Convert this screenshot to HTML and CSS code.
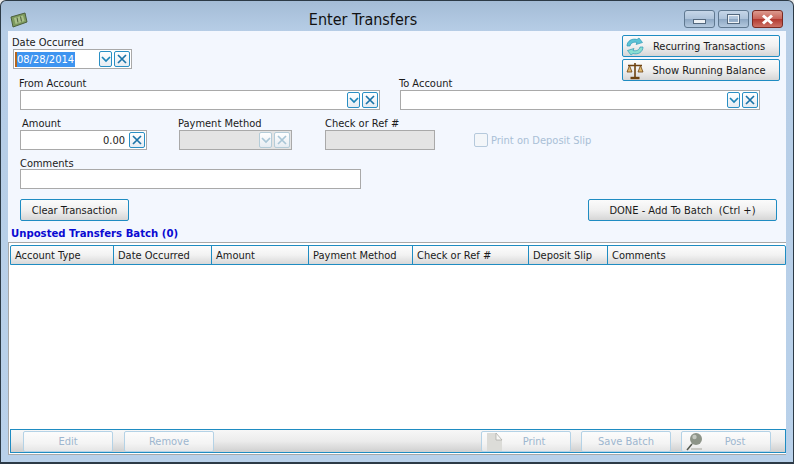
FILE: index.html
```html
<!DOCTYPE html>
<html lang="en">
<head>
    <meta charset="UTF-8">
    <title>Enter Transfers</title>
    <link rel="stylesheet" href="styles.css">
</head>
<body>

<div class="window">
    <div class="titlebar">
        <svg class="app-icon" width="18" height="16" viewBox="0 0 18 16">
            <path d="M1 5 L15 1 L17 10 L3 15 Z" fill="#7d9a5e" stroke="#4c5f3c"/>
            <path d="M4 6 L13 3.500 L14.500 9 L5.500 12 Z" fill="#a9c08a"/>
            <path d="M7 5.500 L8 10.500 M10.500 4.500 L11.500 9.500" stroke="#4c5f3c"/>
        </svg>
        <div class="title">Enter Transfers</div>
        <div class="win-buttons">
            <div class="win-btn"><span class="glyph-min"></span></div>
            <div class="win-btn"><span class="glyph-max"></span></div>
            <div class="win-btn win-close">
                <svg width="15" height="11" viewBox="0 0 15 11"><path d="M3 1.500 L12 9.500 M12 1.500 L3 9.500" stroke="#fff" stroke-width="3"/></svg>
            </div>
        </div>
    </div>

    <div class="client">
        <div class="row row-top">
            <div class="field date-field">
                <label class="shift-left">Date Occurred</label>
                <div class="box">
                    <span class="caret"></span><span class="selected">08/28/2014</span>
                    <span class="mini-btn">
                        <svg width="10" height="8" viewBox="0 0 10 8"><path d="M1 2 L5 6 L9 2" fill="none" stroke="#1c84b8" stroke-width="1.700"/></svg>
                    </span>
                    <span class="mini-btn mini-x">
                        <svg width="10" height="10" viewBox="0 0 10 10"><path d="M1 1 L9 9 M9 1 L1 9" stroke="#1c74a8" stroke-width="1.700"/></svg>
                    </span>
                </div>
            </div>
            <div class="top-actions">
                <button class="button top-button">
                    <svg class="btn-icon" width="18" height="19" viewBox="0 0 18 19">
                        <path d="M1 9 C1 4 6 1 11 2.500 L13 1 L16.500 5.500 L10 7.500 L11 5.500 C8 4.500 4.500 6 4 9 Z" fill="#5cc3d6" stroke="#2f9ab8" stroke-width="0.700"/>
                        <path d="M17 10 C17 15 12 18 7 16.500 L5 18 L1.500 13.500 L8 11.500 L7 13.500 C10 14.500 13.500 13 14 10 Z" fill="#8adfd2" stroke="#2f9ab8" stroke-width="0.700"/>
                    </svg>
                    Recurring Transactions
                </button>
                <button class="button top-button">
                    <svg class="btn-icon" width="18" height="19" viewBox="0 0 18 19">
                        <path d="M9 2 V16 M2 4.500 H16" stroke="#6e4210" stroke-width="1.600"/>
                        <path d="M4.500 17 H13.500" stroke="#6e4210" stroke-width="2.400"/>
                        <path d="M3.500 4.500 L1 11 H6 Z M14.500 4.500 L12 11 H17 Z" fill="#e0b96e" stroke="#6e4210" stroke-width="0.800"/>
                    </svg>
                    Show Running Balance
                </button>
            </div>
        </div>

        <div class="row row-accounts">
            <div class="field account-field">
                <label class="shift-left">From Account</label>
                <div class="box">
                    <span class="mini-btn">
                        <svg width="10" height="8" viewBox="0 0 10 8"><path d="M1 2 L5 6 L9 2" fill="none" stroke="#1c84b8" stroke-width="1.700"/></svg>
                    </span>
                    <span class="mini-btn mini-x">
                        <svg width="10" height="10" viewBox="0 0 10 10"><path d="M1 1 L9 9 M9 1 L1 9" stroke="#1c74a8" stroke-width="1.700"/></svg>
                    </span>
                </div>
            </div>
            <div class="field account-field to-field">
                <label class="shift-left">To Account</label>
                <div class="box">
                    <span class="mini-btn">
                        <svg width="10" height="8" viewBox="0 0 10 8"><path d="M1 2 L5 6 L9 2" fill="none" stroke="#1c84b8" stroke-width="1.700"/></svg>
                    </span>
                    <span class="mini-btn mini-x">
                        <svg width="10" height="10" viewBox="0 0 10 10"><path d="M1 1 L9 9 M9 1 L1 9" stroke="#1c74a8" stroke-width="1.700"/></svg>
                    </span>
                </div>
            </div>
        </div>

        <div class="row row-amount">
            <div class="field amount-field">
                <label class="shift-right">Amount</label>
                <div class="box">
                    <span class="amount-value">0.00</span>
                    <span class="mini-btn mini-x">
                        <svg width="10" height="10" viewBox="0 0 10 10"><path d="M1 1 L9 9 M9 1 L1 9" stroke="#1c74a8" stroke-width="1.700"/></svg>
                    </span>
                </div>
            </div>
            <div class="field method-field">
                <label class="shift-left">Payment Method</label>
                <div class="box box-disabled">
                    <span class="mini-btn">
                        <svg width="10" height="8" viewBox="0 0 10 8"><path d="M1 2 L5 6 L9 2" fill="none" stroke="#a9c6d6" stroke-width="1.700"/></svg>
                    </span>
                    <span class="mini-btn mini-x">
                        <svg width="10" height="10" viewBox="0 0 10 10"><path d="M1 1 L9 9 M9 1 L1 9" stroke="#a9c6d6" stroke-width="1.700"/></svg>
                    </span>
                </div>
            </div>
            <div class="field ref-field">
                <label>Check or Ref #</label>
                <div class="box box-disabled"></div>
            </div>
            <div class="deposit-check">
                <span class="checkbox"></span>
                <span>Print on Deposit Slip</span>
            </div>
        </div>

        <div class="row row-comments">
            <div class="field comments-field">
                <label>Comments</label>
                <div class="box"></div>
            </div>
        </div>

        <div class="row row-actions">
            <button class="button clear-button">Clear Transaction</button>
            <button class="button done-button">DONE - Add To Batch&nbsp; (Ctrl +)</button>
        </div>

        <div class="batch-title">Unposted Transfers Batch (0)</div>

        <div class="grid">
            <div class="grid-header">
                <div class="col col-type">Account Type</div>
                <div class="col col-date">Date Occurred</div>
                <div class="col col-amount">Amount</div>
                <div class="col col-method">Payment Method</div>
                <div class="col col-ref">Check or Ref #</div>
                <div class="col col-slip">Deposit Slip</div>
                <div class="col col-comments">Comments</div>
            </div>
            <div class="grid-body"></div>
            <div class="grid-footer">
                <button class="foot-button foot-edit">Edit</button>
                <button class="foot-button foot-remove">Remove</button>
                <button class="foot-button foot-print">
                    <svg class="foot-icon" width="18" height="20" viewBox="0 0 18 20">
                        <path d="M2 1 H11 L17 8 V19 H2 Z" fill="#dcdcd8"/>
                        <path d="M11 1 L17 8 H11 Z" fill="#f7f7f5" stroke="#a8a8a4" stroke-width="0.700"/>
                    </svg>
                    Print
                </button>
                <button class="foot-button foot-save">Save Batch</button>
                <button class="foot-button foot-post">
                    <svg class="foot-icon" width="18" height="20" viewBox="0 0 18 20">
                        <circle cx="11" cy="7" r="6" fill="#8d9488"/>
                        <circle cx="9.500" cy="5" r="2.200" fill="#c4c8c0"/>
                        <path d="M7 12 L2 18" stroke="#55594f" stroke-width="1.500"/>
                        <path d="M6 17 H17" stroke="#c8c8c4" stroke-width="2"/>
                    </svg>
                    Post
                </button>
            </div>
        </div>
    </div>
</div>

</body>
</html>
```

FILE: styles.css
```css
* {
    box-sizing: border-box;
}
body {
    margin: 0;
    background: #e8e8e8;
    font-family: "DejaVu Sans", sans-serif;
    font-stretch: condensed;
    font-size: 11px;
    color: #1a1a1a;
}
.window {
    width: 794px;
    height: 464px;
    display: flex;
    flex-direction: column;
    padding: 0 7px 7px;
    background: linear-gradient(to bottom, #a4bcd6 0, #b6cde6 30px, #b9d1ea 100%);
    border: 1px solid #2c3a46;
    border-bottom-width: 2px;
    border-radius: 6px 6px 0 0;
}
.titlebar {
    height: 30px;
    flex: none;
    display: flex;
    align-items: flex-start;
    position: relative;
}
.app-icon {
    margin: 11px 0 0 2px;
}
.title {
    position: absolute;
    left: 0;
    width: 710px;
    top: 10px;
    text-align: center;
    font-size: 16px;
    line-height: 18px;
    color: #111;
}
.win-buttons {
    margin: 9px 3px 0 auto;
    display: flex;
    gap: 3px;
}
.win-btn {
    width: 31px;
    height: 18px;
    display: flex;
    align-items: center;
    justify-content: center;
    border: 1px solid #5f7890;
    border-radius: 3px;
    background: linear-gradient(to bottom, #c6d6e8 0, #aec3da 48%, #8ea8c4 52%, #b3c8de 100%);
}
.win-close {
    border-color: #7a2a22;
    background: linear-gradient(to bottom, #dc9a8e 0, #c9655a 48%, #b23a30 52%, #cd7266 100%);
}
.glyph-min {
    width: 13px;
    height: 5px;
    margin-top: 4px;
    background: #eef2f6;
    border: 1px solid #53687e;
}
.glyph-max {
    width: 13px;
    height: 10px;
    border: 2px solid #eef2f6;
    outline: 1px solid #53687e;
    outline-offset: -1px;
}

.client {
    flex: 1;
    display: flex;
    flex-direction: column;
    background: #f3f7fe;
    padding-top: 4px;
    border-bottom: 1px solid #a8a8a8;
    min-height: 0;
}
.row {
    display: flex;
    flex: none;
}
.row-top {
    height: 46px;
    justify-content: space-between;
    padding-left: 5px;
    padding-right: 6px;
}
.row-accounts {
    margin-top: -5px;
    padding-left: 12px;
}
.row-amount {
    margin-top: 6px;
    padding-left: 12px;
}
.row-comments {
    margin-top: 5px;
    padding-left: 12px;
}
.row-actions {
    margin-top: 10px;
    padding-left: 12px;
    padding-right: 9px;
    justify-content: space-between;
}
.field label {
    display: block;
    height: 14px;
    line-height: 16px;
    white-space: nowrap;
}
.comments-field label {
    line-height: 18px;
}
.shift-left {
    margin-left: -1px;
}
.shift-right {
    margin-left: 2px;
}
.box {
    height: 20px;
    display: flex;
    align-items: center;
    justify-content: flex-end;
    gap: 2px;
    padding-right: 1px;
    border: 1px solid #a9a9a9;
    background: #fff;
}
.box-disabled {
    background: #e4e4e4;
}
.date-field {
    width: 119px;
}
.account-field {
    width: 360px;
}
.to-field {
    margin-left: 20px;
}
.amount-field {
    width: 127px;
}
.method-field {
    width: 113px;
    margin-left: 32px;
}
.ref-field {
    width: 110px;
    margin-left: 33px;
}
.comments-field {
    width: 341px;
}
.caret {
    width: 2px;
    height: 15px;
    margin-left: 1px;
    background: #b5651d;
}
.selected {
    margin-right: auto;
    margin-left: -2px;
    padding: 0 1px 0 0;
    height: 15px;
    line-height: 15px;
    background: #3d94f0;
    color: #fff;
}
.mini-btn {
    width: 13px;
    height: 16px;
    display: flex;
    align-items: center;
    justify-content: center;
    border: 1px solid #2a8fc4;
    border-radius: 2px;
    background: linear-gradient(to bottom, #ffffff, #e6ecf2);
}
.mini-x {
    width: 16px;
}
.box-disabled .mini-btn {
    border-color: #b4ccd8;
}
.amount-value {
    margin-right: 2px;
}
.deposit-check {
    display: flex;
    align-items: center;
    gap: 3px;
    height: 20px;
    margin: 14px 0 0 39px;
    color: #a9bfd6;
}
.checkbox {
    width: 14px;
    height: 14px;
    border: 1px solid #b5c9dc;
    border-radius: 2px;
    background: #f3f6f9;
}

.button {
    display: flex;
    align-items: center;
    justify-content: center;
    padding: 0;
    font-family: inherit;
    font-stretch: inherit;
    font-size: 11px;
    color: #1a1a1a;
    border: 1px solid #1f8cc2;
    border-radius: 2px;
    background: linear-gradient(to bottom, #fbfbfb 0, #f0f0f0 50%, #d6d6d6 100%);
}
.top-actions {
    display: flex;
    flex-direction: column;
    gap: 2px;
}
.top-button {
    width: 158px;
    height: 22px;
    position: relative;
    padding-left: 16px;
}
.btn-icon {
    position: absolute;
    left: 3px;
    top: 1px;
}
.clear-button {
    width: 109px;
    height: 22px;
}
.done-button {
    width: 189px;
    height: 22px;
}

.batch-title {
    flex: none;
    height: 14px;
    margin: 5px 0 2px 3px;
    line-height: 16px;
    font-size: 11.25px;
    font-weight: bold;
    color: #0a0ad2;
}
.grid {
    flex: 1;
    display: flex;
    flex-direction: column;
    min-height: 0;
    padding: 2px 0 1px 1px;
    background: #fff;
    border-top: 1px solid #a8a8a8;
    border-left: 1px solid #a8a8a8;
}
.grid-header {
    flex: none;
    height: 20px;
    display: flex;
    border: 1px solid #1f8cc2;
    border-radius: 2px 2px 0 0;
    background: linear-gradient(to bottom, #fdfdfd 0, #f2f2f2 50%, #d8d8d8 100%);
}
.col {
    padding-left: 4px;
    line-height: 20px;
    border-left: 1px solid #1f8cc2;
    white-space: nowrap;
}
.col-type {
    width: 102px;
    border-left: none;
}
.col-date {
    width: 98px;
}
.col-amount {
    width: 97px;
}
.col-method {
    width: 104px;
}
.col-ref {
    width: 116px;
}
.col-slip {
    width: 79px;
}
.col-comments {
    flex: 1;
}
.grid-body {
    flex: 1;
}
.grid-footer {
    flex: none;
    height: 24px;
    display: flex;
    align-items: center;
    padding-left: 12px;
    border: 1px solid #1f8cc2;
    background: linear-gradient(to bottom, #f7f7f7 0, #ececec 50%, #cfcfcf 100%);
}
.foot-button {
    width: 90px;
    height: 21px;
    position: relative;
    padding: 0;
    font-family: inherit;
    font-stretch: inherit;
    font-size: 11px;
    color: #9db6cf;
    border: 1px solid #b4d2e6;
    border-radius: 2px;
    background: linear-gradient(to bottom, #fcfcfc 0, #f4f4f4 60%, #e6e6e6 100%);
}
.foot-remove {
    margin-left: 11px;
}
.foot-print {
    margin-left: auto;
    padding-left: 16px;
}
.foot-save, .foot-post {
    margin-left: 10px;
}
.foot-post {
    margin-right: 14px;
    padding-left: 18px;
}
.foot-icon {
    position: absolute;
    left: 3px;
    top: 0;
}
```
